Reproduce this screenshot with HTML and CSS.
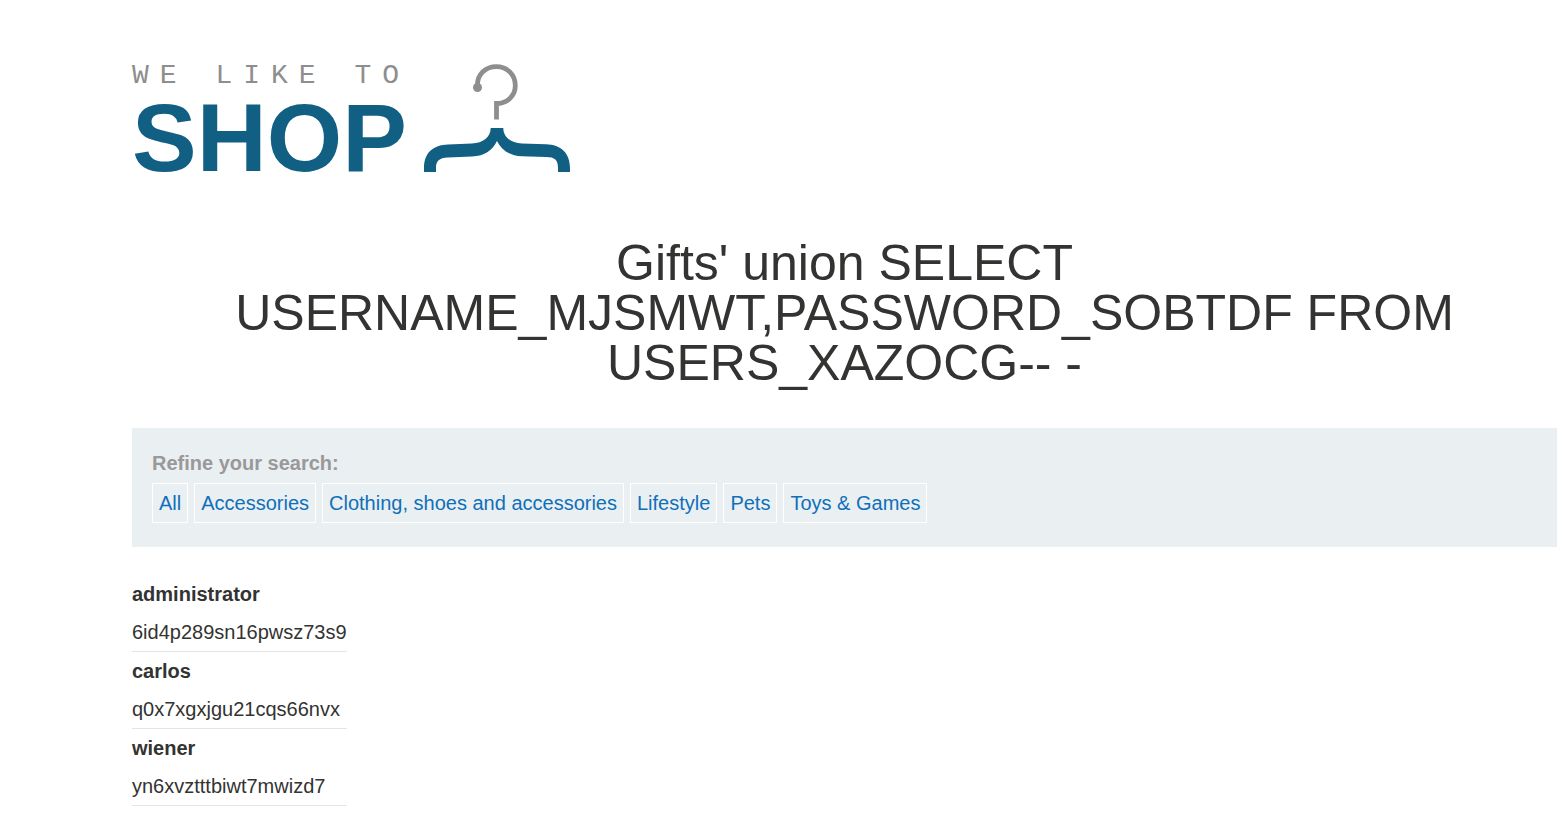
FILE: index.html
```html
<!DOCTYPE html>
<html lang="en">
<head>
<meta charset="utf-8">
<title>We Like To Shop</title>
<link rel="stylesheet" href="styles.css">
</head>
<body>
<main class="page">
  <header class="logo">
    <div class="logo-words">
      <span class="logo-tagline">WE LIKE TO</span>
      <span class="logo-name">SHOP</span>
    </div>
    <svg class="logo-hanger" width="146" height="108" viewBox="0 0 146 108" aria-hidden="true">
      <path d="M53.500 22C53 10 62 2.700 72.500 2.700C83.500 2.700 91.300 11 91.300 21.500C91.300 32 83 39.500 72.500 39.500V55.500" fill="none" stroke="#8e8e8e" stroke-width="4.800"/>
      <circle cx="53.500" cy="23.500" r="4.500" fill="#8e8e8e"/>
      <path d="M66.700 64H79.300C79.300 73 87 79.300 98 79.500L122 80.200C137 80.700 146 89 146 104V108H134V104C134 96 131 92.900 122 92.900L98 92.300C85 91.700 77.500 86 73 77C68.500 86 61 92 48 92.500L24 93.500C15 93.900 12 97 12 104V108H0V104C0 89 9 81 24 80.500L48 79.500C59 79.200 66.700 73 66.700 64Z" fill="#125f84"/>
    </svg>
  </header>
  <h1 class="title">Gifts' union SELECT USERNAME_MJSMWT,PASSWORD_SOBTDF FROM USERS_XAZOCG-- -</h1>
  <section class="filters">
    <h2 class="filters-label">Refine your search:</h2>
    <nav class="filters-list">
      <a class="filter" href="#">All</a>
      <a class="filter" href="#">Accessories</a>
      <a class="filter" href="#">Clothing, shoes and accessories</a>
      <a class="filter" href="#">Lifestyle</a>
      <a class="filter" href="#">Pets</a>
      <a class="filter" href="#">Toys &amp; Games</a>
    </nav>
  </section>
  <table class="results">
    <tbody>
      <tr><th scope="row">administrator</th><td>6id4p289sn16pwsz73s9</td></tr>
      <tr><th scope="row">carlos</th><td>q0x7xgxjgu21cqs66nvx</td></tr>
      <tr><th scope="row">wiener</th><td>yn6xvztttbiwt7mwizd7</td></tr>
    </tbody>
  </table>
</main>
</body>
</html>
```
FILE: styles.css
```css
body {
  margin: 0;
  background: #fff;
  color: #333332;
  font-family: "Liberation Sans", Arial, sans-serif;
  font-size: 20px;
}

.page {
  padding: 64px 8px 24px 132px;
}

.logo {
  display: flex;
  align-items: flex-start;
  gap: 20px;
  height: 110px;
}

.logo-words {
  display: flex;
  flex-direction: column;
  width: 272px;
}

.logo-tagline {
  color: #8e8e8e;
  font-family: "Liberation Mono", monospace;
  font-size: 28px;
  line-height: 24px;
  letter-spacing: 11px;
  white-space: nowrap;
}

.logo-name {
  color: #125f84;
  font-size: 97px;
  font-weight: 700;
  line-height: 100px;
}

.title {
  margin: 64px 0 40px;
  font-size: 50px;
  font-weight: 400;
  line-height: 50px;
  text-align: center;
}

.filters {
  padding: 20px 20px 24px;
  background: #eaeff2;
}

.filters-label {
  margin: 0 0 5px;
  color: #999;
  font-size: 20px;
  font-weight: 700;
  line-height: 30px;
}

.filters-list {
  display: flex;
  flex-wrap: wrap;
  gap: 6px;
}

.filter {
  padding: 0 6px;
  border: 1px solid #fff;
  color: #0f70ba;
  line-height: 38px;
  text-decoration: none;
}

.results {
  margin-top: 28px;
  border-collapse: collapse;
}

.results tr {
  display: block;
  border-bottom: 1px solid #e4e4e4;
}

.results th,
.results td {
  display: block;
  padding: 0;
  line-height: 38px;
  text-align: left;
}
```
